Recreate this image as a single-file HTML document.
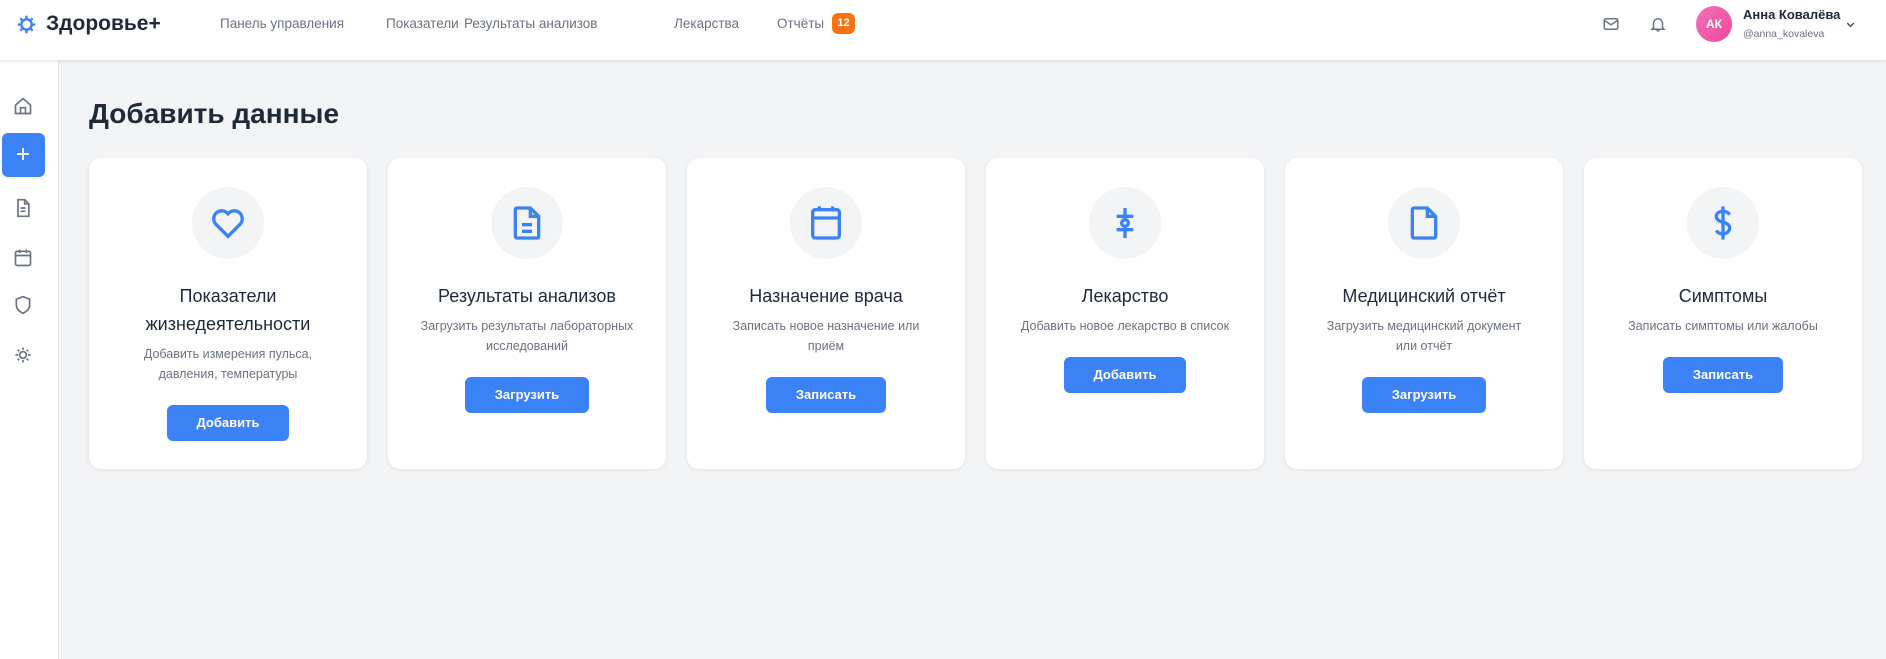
<!DOCTYPE html>
<html><head><meta charset="utf-8"><style>
*{box-sizing:border-box;margin:0;padding:0}
body{width:1886px;height:659px;background:#f3f4f6;font-family:"Liberation Sans","Noto Sans CJK SC",sans-serif;color:#1f2937;position:relative;overflow:hidden}
.hdr{position:absolute;left:0;top:0;width:1886px;height:60px;background:#fff;box-shadow:0 1px 3px rgba(0,0,0,.12);z-index:2}
.logo{position:absolute;left:17px;top:12px;display:flex;align-items:center;font-weight:bold;font-size:21px;color:#1f2937}
.logo svg{margin-right:10px}
.nav{position:absolute;top:0;height:48px;line-height:48px;font-size:13.5px;color:#6b7280;white-space:nowrap}
.badge{position:absolute;left:832px;top:13px;width:23px;height:21px;border-radius:6px;background:#f97316;color:#fff;font-size:11px;font-weight:bold;text-align:center;line-height:21px}
.side{position:absolute;left:0;top:60px;width:59px;height:599px;background:#fff;border-right:1px solid #e5e7eb}
.side svg{position:absolute;left:13px}
.act{position:absolute;left:2px;top:133px;width:43px;height:44px;background:#3b82f6;border-radius:6px}
h1{position:absolute;left:89px;top:98px;font-size:28px;font-weight:bold;color:#1f2937}
.card{position:absolute;top:158px;width:278px;height:311px;background:#fff;border-radius:12px;box-shadow:0 1px 4px rgba(0,0,0,.08);text-align:center;padding-top:29px}
.ic{width:72px;height:72px;border-radius:50%;background:#f3f4f6;margin:0 auto;display:flex;align-items:center;justify-content:center}
.t{font-size:18px;line-height:28px;margin:23px 20px 0;color:#1f2937}
.d{font-size:12.5px;line-height:20px;color:#6b7280;margin:6px auto 0;max-width:215px}
.b{display:inline-block;margin-top:21px;height:36px;line-height:36px;padding:0 30px;background:#3b82f6;color:#fff;font-weight:bold;font-size:13px;border-radius:6px}
</style></head><body>
<div class="hdr">
 <div class="logo"><svg width="19" height="19" viewBox="0 0 24 24" fill="none" stroke="#3b82f6" stroke-width="3"><circle cx="12" cy="12" r="6.5"/><path d="M12 1v4M12 19v4M1 12h4M19 12h4M4.2 4.2l2.8 2.8M17 17l2.8 2.8M4.2 19.8L7 17M17 7l2.8-2.8"/></svg>Здоровье+</div>
 <div class="nav" style="left:220px">Панель управления</div>
 <div class="nav" style="left:386px">Показатели</div>
 <div class="nav" style="left:464px">Результаты анализов</div>
 <div class="nav" style="left:674px">Лекарства</div>
 <div class="nav" style="left:777px">Отчёты</div>
 <div class="badge">12</div>
 <svg style="position:absolute;left:1602px;top:15px" width="18" height="18" viewBox="0 0 24 24" fill="none" stroke="#6b7280" stroke-width="2"><rect x="3" y="5" width="18" height="14" rx="2"/><path d="M3 7l9 6 9-6"/></svg>
 <svg style="position:absolute;left:1649px;top:14px" width="18" height="20" viewBox="0 0 24 24" fill="none" stroke="#6b7280" stroke-width="2"><path d="M6 17V11a6 6 0 0 1 12 0v6l2 2H4z"/><path d="M10 21h4"/></svg>
 <div style="position:absolute;left:1696px;top:6px;width:36px;height:36px;border-radius:50%;background:linear-gradient(135deg,#f472b6,#ec4899);color:#fff;font-size:12px;font-weight:bold;text-align:center;line-height:36px">АК</div>
 <div style="position:absolute;left:1743px;top:7px;font-size:13px;font-weight:bold;color:#1f2937">Анна Ковалёва</div>
 <div style="position:absolute;left:1743px;top:28px;font-size:10.5px;color:#6b7280">@anna_kovaleva</div>
 <svg style="position:absolute;left:1845px;top:19px" width="11" height="11" viewBox="0 0 24 24" fill="none" stroke="#374151" stroke-width="3"><path d="M5 9l7 7 7-7"/></svg>
</div>
<div class="side">
 <svg style="top:36px" width="20" height="20" viewBox="0 0 24 24" fill="none" stroke="#6b7280" stroke-width="2"><path d="M3 11l9-8 9 8v10H3z"/><path d="M9 21v-7h6v7"/></svg>
 <div class="act" style="top:73px"></div>
 <svg style="top:85px;left:14px" width="18" height="18" viewBox="0 0 24 24" fill="none" stroke="#fff" stroke-width="2.5"><path d="M12 4v16M4 12h16"/></svg>
 <svg style="top:138px" width="20" height="20" viewBox="0 0 24 24" fill="none" stroke="#6b7280" stroke-width="2"><path d="M6 2h8l5 5v15H6z"/><path d="M14 2v5h5M9 12h6M9 16h6"/></svg>
 <svg style="top:188px" width="20" height="20" viewBox="0 0 24 24" fill="none" stroke="#6b7280" stroke-width="2"><rect x="3" y="4" width="18" height="17" rx="2"/><path d="M3 9h18M8 2v4M16 2v4"/></svg>
 <svg style="top:235px" width="20" height="20" viewBox="0 0 24 24" fill="none" stroke="#6b7280" stroke-width="2"><path d="M12 2l8 3v7c0 5-4 8-8 10-4-2-8-5-8-10V5z"/></svg>
 <svg style="top:285px" width="20" height="20" viewBox="0 0 24 24" fill="none" stroke="#6b7280" stroke-width="2"><circle cx="12" cy="12" r="4"/><path d="M12 3v3M12 18v3M3 12h3M18 12h3M5.6 5.6l2 2M16.4 16.4l2 2M5.6 18.4l2-2M16.4 7.6l2-2"/></svg>
</div>
<h1>Добавить данные</h1>

<div class="card" style="left:89px"><div class="ic"><svg width="40" height="40" viewBox="0 0 24 24" fill="none" stroke="#3b82f6" stroke-width="2"><path d="M12 20L4.5 12.5A4.6 4.6 0 0 1 12 6.5a4.6 4.6 0 0 1 7.5 6z"/></svg></div>
<div class="t">Показатели жизнедеятельности</div><div class="d">Добавить измерения пульса, давления, температуры</div><div class="b">Добавить</div></div>

<div class="card" style="left:388px"><div class="ic"><svg width="40" height="40" viewBox="0 0 24 24" fill="none" stroke="#3b82f6" stroke-width="2"><path d="M6 3h8l5 5v12a1 1 0 0 1-1 1H6a1 1 0 0 1-1-1V4a1 1 0 0 1 1-1z"/><path d="M14 3v5h5M9 13h6M9 17h6"/></svg></div>
<div class="t">Результаты анализов</div><div class="d">Загрузить результаты лабораторных исследований</div><div class="b">Загрузить</div></div>

<div class="card" style="left:687px"><div class="ic"><svg width="40" height="40" viewBox="0 0 24 24" fill="none" stroke="#3b82f6" stroke-width="2"><rect x="4" y="4" width="16" height="17" rx="1.5"/><path d="M4 9h16M8 2v3M16 2v3"/></svg></div>
<div class="t">Назначение врача</div><div class="d">Записать новое назначение или приём</div><div class="b">Записать</div></div>

<div class="card" style="left:986px"><div class="ic"><svg width="40" height="40" viewBox="0 0 24 24" fill="none" stroke="#3b82f6" stroke-width="2"><path d="M12 3v7M12 14v7M7 8h10M7 16h10"/><circle cx="12" cy="12" r="2"/></svg></div>
<div class="t">Лекарство</div><div class="d">Добавить новое лекарство в список</div><div class="b">Добавить</div></div>

<div class="card" style="left:1285px"><div class="ic"><svg width="40" height="40" viewBox="0 0 24 24" fill="none" stroke="#3b82f6" stroke-width="2"><path d="M6 3h8l5 5v12a1 1 0 0 1-1 1H6a1 1 0 0 1-1-1V4a1 1 0 0 1 1-1z"/><path d="M14 3v5h5"/></svg></div>
<div class="t">Медицинский отчёт</div><div class="d">Загрузить медицинский документ или отчёт</div><div class="b">Загрузить</div></div>

<div class="card" style="left:1584px"><div class="ic"><svg width="40" height="40" viewBox="0 0 24 24" fill="none" stroke="#3b82f6" stroke-width="2"><path d="M12 2v20M16 7c-1-1.5-2.5-2-4-2-2 0-4 1-4 3s2 3 4 3.5 4 1.5 4 3.5-2 3.5-4 3.5c-1.8 0-3.3-.8-4-2"/></svg></div>
<div class="t">Симптомы</div><div class="d">Записать симптомы или жалобы</div><div class="b">Записать</div></div>
</body></html>
